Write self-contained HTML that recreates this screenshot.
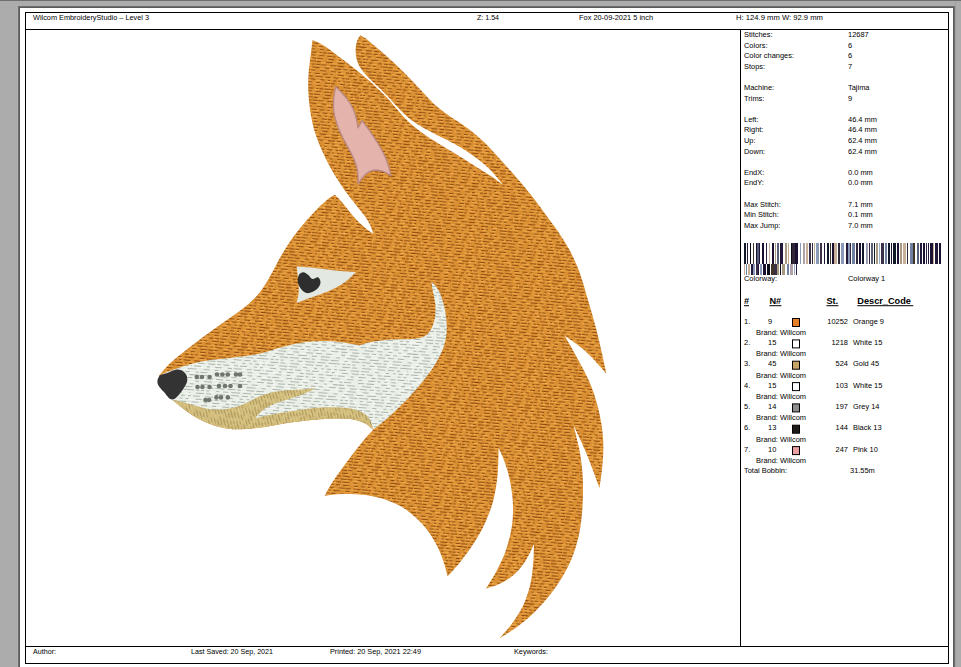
<!DOCTYPE html>
<html><head><meta charset="utf-8">
<style>
html,body{margin:0;padding:0;width:961px;height:667px;overflow:hidden;background:#acacac;}
svg{display:block;}
text{font-family:"Liberation Sans",sans-serif;fill:#000;}
</style></head><body>
<svg width="961" height="667" viewBox="0 0 961 667">
<rect x="0" y="0" width="961" height="667" fill="#acacac"/>
<rect x="0" y="0" width="961" height="1" fill="#6e6e6e"/>
<rect x="955" y="1" width="1" height="666" fill="#a0a0a0"/>
<rect x="18" y="6" width="937" height="661" fill="#6e6e6e"/>
<rect x="19" y="7" width="935" height="660" fill="#5a5a5a"/>
<rect x="20" y="8" width="933" height="659" fill="#ffffff"/>
<g fill="#000">
<rect x="25" y="12" width="924" height="1"/>
<rect x="25" y="12" width="1" height="652"/>
<rect x="948" y="12" width="1" height="652"/>
<rect x="25" y="663" width="924" height="1"/>
<rect x="25" y="29" width="924" height="1"/>
<rect x="25" y="646" width="924" height="1"/>
<rect x="740" y="29" width="1" height="618"/>
</g>
<defs><pattern id="tO" width="72" height="36" patternUnits="userSpaceOnUse" patternTransform="rotate(5)"><rect width="72" height="36" fill="#da8f32"/><rect x="-2" y="0" width="6" height="1" fill="#7c3a08" opacity="0.75"/><rect x="5" y="0" width="4" height="1" fill="#7c3a08" opacity="0.75"/><rect x="10" y="0" width="5" height="1" fill="#7c3a08" opacity="0.75"/><rect x="19" y="0" width="5" height="1" fill="#7c3a08" opacity="0.75"/><rect x="28" y="0" width="3" height="1" fill="#7c3a08" opacity="0.75"/><rect x="32" y="0" width="5" height="1" fill="#7c3a08" opacity="0.75"/><rect x="38" y="0" width="5" height="1" fill="#7c3a08" opacity="0.75"/><rect x="47" y="0" width="6" height="1" fill="#7c3a08" opacity="0.75"/><rect x="54" y="0" width="7" height="1" fill="#7c3a08" opacity="0.75"/><rect x="65" y="0" width="4" height="1" fill="#7c3a08" opacity="0.75"/><rect x="71" y="0" width="6" height="1" fill="#7c3a08" opacity="0.75"/><rect x="-1" y="0" width="6" height="1" fill="#7c3a08" opacity="0.75"/><rect x="-2" y="1" width="3" height="1" fill="#fcbc5c" opacity="0.6"/><rect x="3" y="1" width="3" height="1" fill="#fcbc5c" opacity="0.6"/><rect x="12" y="1" width="3" height="1" fill="#fcbc5c" opacity="0.6"/><rect x="20" y="1" width="8" height="1" fill="#fcbc5c" opacity="0.6"/><rect x="31" y="1" width="6" height="1" fill="#fcbc5c" opacity="0.6"/><rect x="39" y="1" width="7" height="1" fill="#fcbc5c" opacity="0.6"/><rect x="49" y="1" width="6" height="1" fill="#fcbc5c" opacity="0.6"/><rect x="60" y="1" width="7" height="1" fill="#fcbc5c" opacity="0.6"/><rect x="70" y="1" width="5" height="1" fill="#fcbc5c" opacity="0.6"/><rect x="-2" y="1" width="5" height="1" fill="#fcbc5c" opacity="0.6"/><rect x="-3" y="3" width="5" height="1" fill="#7c3a08" opacity="0.75"/><rect x="5" y="3" width="2" height="1" fill="#7c3a08" opacity="0.75"/><rect x="11" y="3" width="6" height="1" fill="#7c3a08" opacity="0.75"/><rect x="18" y="3" width="3" height="1" fill="#7c3a08" opacity="0.75"/><rect x="24" y="3" width="2" height="1" fill="#7c3a08" opacity="0.75"/><rect x="29" y="3" width="7" height="1" fill="#7c3a08" opacity="0.75"/><rect x="41" y="3" width="5" height="1" fill="#7c3a08" opacity="0.75"/><rect x="51" y="3" width="7" height="1" fill="#7c3a08" opacity="0.75"/><rect x="60" y="3" width="4" height="1" fill="#7c3a08" opacity="0.75"/><rect x="67" y="3" width="6" height="1" fill="#7c3a08" opacity="0.75"/><rect x="-5" y="3" width="6" height="1" fill="#7c3a08" opacity="0.75"/><rect x="-6" y="4" width="7" height="1" fill="#fcbc5c" opacity="0.6"/><rect x="6" y="4" width="7" height="1" fill="#fcbc5c" opacity="0.6"/><rect x="15" y="4" width="6" height="1" fill="#fcbc5c" opacity="0.6"/><rect x="24" y="4" width="8" height="1" fill="#fcbc5c" opacity="0.6"/><rect x="37" y="4" width="6" height="1" fill="#fcbc5c" opacity="0.6"/><rect x="46" y="4" width="5" height="1" fill="#fcbc5c" opacity="0.6"/><rect x="57" y="4" width="8" height="1" fill="#fcbc5c" opacity="0.6"/><rect x="69" y="4" width="3" height="1" fill="#fcbc5c" opacity="0.6"/><rect x="-8" y="6" width="2" height="1" fill="#7c3a08" opacity="0.75"/><rect x="-4" y="6" width="6" height="1" fill="#7c3a08" opacity="0.75"/><rect x="6" y="6" width="4" height="1" fill="#7c3a08" opacity="0.75"/><rect x="14" y="6" width="7" height="1" fill="#7c3a08" opacity="0.75"/><rect x="22" y="6" width="5" height="1" fill="#7c3a08" opacity="0.75"/><rect x="28" y="6" width="4" height="1" fill="#7c3a08" opacity="0.75"/><rect x="37" y="6" width="6" height="1" fill="#7c3a08" opacity="0.75"/><rect x="48" y="6" width="5" height="1" fill="#7c3a08" opacity="0.75"/><rect x="55" y="6" width="3" height="1" fill="#7c3a08" opacity="0.75"/><rect x="63" y="6" width="3" height="1" fill="#7c3a08" opacity="0.75"/><rect x="67" y="6" width="3" height="1" fill="#7c3a08" opacity="0.75"/><rect x="-6" y="7" width="7" height="1" fill="#fcbc5c" opacity="0.6"/><rect x="4" y="7" width="6" height="1" fill="#fcbc5c" opacity="0.6"/><rect x="16" y="7" width="5" height="1" fill="#fcbc5c" opacity="0.6"/><rect x="27" y="7" width="5" height="1" fill="#fcbc5c" opacity="0.6"/><rect x="37" y="7" width="5" height="1" fill="#fcbc5c" opacity="0.6"/><rect x="48" y="7" width="7" height="1" fill="#fcbc5c" opacity="0.6"/><rect x="57" y="7" width="6" height="1" fill="#fcbc5c" opacity="0.6"/><rect x="69" y="7" width="4" height="1" fill="#fcbc5c" opacity="0.6"/><rect x="-3" y="7" width="4" height="1" fill="#fcbc5c" opacity="0.6"/><rect x="-8" y="9" width="3" height="1" fill="#7c3a08" opacity="0.75"/><rect x="-1" y="9" width="2" height="1" fill="#7c3a08" opacity="0.75"/><rect x="5" y="9" width="4" height="1" fill="#7c3a08" opacity="0.75"/><rect x="14" y="9" width="6" height="1" fill="#7c3a08" opacity="0.75"/><rect x="22" y="9" width="6" height="1" fill="#7c3a08" opacity="0.75"/><rect x="32" y="9" width="5" height="1" fill="#7c3a08" opacity="0.75"/><rect x="40" y="9" width="5" height="1" fill="#7c3a08" opacity="0.75"/><rect x="48" y="9" width="2" height="1" fill="#7c3a08" opacity="0.75"/><rect x="55" y="9" width="6" height="1" fill="#7c3a08" opacity="0.75"/><rect x="66" y="9" width="6" height="1" fill="#7c3a08" opacity="0.75"/><rect x="-3" y="10" width="7" height="1" fill="#fcbc5c" opacity="0.6"/><rect x="6" y="10" width="4" height="1" fill="#fcbc5c" opacity="0.6"/><rect x="13" y="10" width="7" height="1" fill="#fcbc5c" opacity="0.6"/><rect x="26" y="10" width="4" height="1" fill="#fcbc5c" opacity="0.6"/><rect x="32" y="10" width="7" height="1" fill="#fcbc5c" opacity="0.6"/><rect x="43" y="10" width="3" height="1" fill="#fcbc5c" opacity="0.6"/><rect x="48" y="10" width="3" height="1" fill="#fcbc5c" opacity="0.6"/><rect x="53" y="10" width="6" height="1" fill="#fcbc5c" opacity="0.6"/><rect x="61" y="10" width="5" height="1" fill="#fcbc5c" opacity="0.6"/><rect x="69" y="10" width="5" height="1" fill="#fcbc5c" opacity="0.6"/><rect x="-3" y="10" width="5" height="1" fill="#fcbc5c" opacity="0.6"/><rect x="-2" y="12" width="4" height="1" fill="#7c3a08" opacity="0.75"/><rect x="5" y="12" width="2" height="1" fill="#7c3a08" opacity="0.75"/><rect x="9" y="12" width="3" height="1" fill="#7c3a08" opacity="0.75"/><rect x="15" y="12" width="6" height="1" fill="#7c3a08" opacity="0.75"/><rect x="23" y="12" width="7" height="1" fill="#7c3a08" opacity="0.75"/><rect x="33" y="12" width="7" height="1" fill="#7c3a08" opacity="0.75"/><rect x="43" y="12" width="5" height="1" fill="#7c3a08" opacity="0.75"/><rect x="51" y="12" width="5" height="1" fill="#7c3a08" opacity="0.75"/><rect x="60" y="12" width="2" height="1" fill="#7c3a08" opacity="0.75"/><rect x="63" y="12" width="4" height="1" fill="#7c3a08" opacity="0.75"/><rect x="71" y="12" width="4" height="1" fill="#7c3a08" opacity="0.75"/><rect x="-1" y="12" width="4" height="1" fill="#7c3a08" opacity="0.75"/><rect x="-6" y="13" width="4" height="1" fill="#fcbc5c" opacity="0.6"/><rect x="2" y="13" width="3" height="1" fill="#fcbc5c" opacity="0.6"/><rect x="9" y="13" width="8" height="1" fill="#fcbc5c" opacity="0.6"/><rect x="23" y="13" width="4" height="1" fill="#fcbc5c" opacity="0.6"/><rect x="33" y="13" width="6" height="1" fill="#fcbc5c" opacity="0.6"/><rect x="41" y="13" width="4" height="1" fill="#fcbc5c" opacity="0.6"/><rect x="47" y="13" width="6" height="1" fill="#fcbc5c" opacity="0.6"/><rect x="56" y="13" width="3" height="1" fill="#fcbc5c" opacity="0.6"/><rect x="62" y="13" width="6" height="1" fill="#fcbc5c" opacity="0.6"/><rect x="-6" y="15" width="6" height="1" fill="#7c3a08" opacity="0.75"/><rect x="2" y="15" width="7" height="1" fill="#7c3a08" opacity="0.75"/><rect x="14" y="15" width="5" height="1" fill="#7c3a08" opacity="0.75"/><rect x="21" y="15" width="6" height="1" fill="#7c3a08" opacity="0.75"/><rect x="28" y="15" width="5" height="1" fill="#7c3a08" opacity="0.75"/><rect x="38" y="15" width="4" height="1" fill="#7c3a08" opacity="0.75"/><rect x="46" y="15" width="2" height="1" fill="#7c3a08" opacity="0.75"/><rect x="51" y="15" width="3" height="1" fill="#7c3a08" opacity="0.75"/><rect x="56" y="15" width="2" height="1" fill="#7c3a08" opacity="0.75"/><rect x="61" y="15" width="2" height="1" fill="#7c3a08" opacity="0.75"/><rect x="64" y="15" width="4" height="1" fill="#7c3a08" opacity="0.75"/><rect x="71" y="15" width="7" height="1" fill="#7c3a08" opacity="0.75"/><rect x="-1" y="15" width="7" height="1" fill="#7c3a08" opacity="0.75"/><rect x="-3" y="16" width="7" height="1" fill="#fcbc5c" opacity="0.6"/><rect x="8" y="16" width="4" height="1" fill="#fcbc5c" opacity="0.6"/><rect x="14" y="16" width="7" height="1" fill="#fcbc5c" opacity="0.6"/><rect x="23" y="16" width="7" height="1" fill="#fcbc5c" opacity="0.6"/><rect x="33" y="16" width="7" height="1" fill="#fcbc5c" opacity="0.6"/><rect x="45" y="16" width="4" height="1" fill="#fcbc5c" opacity="0.6"/><rect x="55" y="16" width="7" height="1" fill="#fcbc5c" opacity="0.6"/><rect x="64" y="16" width="6" height="1" fill="#fcbc5c" opacity="0.6"/><rect x="-5" y="18" width="2" height="1" fill="#7c3a08" opacity="0.75"/><rect x="-1" y="18" width="6" height="1" fill="#7c3a08" opacity="0.75"/><rect x="9" y="18" width="6" height="1" fill="#7c3a08" opacity="0.75"/><rect x="17" y="18" width="5" height="1" fill="#7c3a08" opacity="0.75"/><rect x="23" y="18" width="7" height="1" fill="#7c3a08" opacity="0.75"/><rect x="34" y="18" width="4" height="1" fill="#7c3a08" opacity="0.75"/><rect x="43" y="18" width="5" height="1" fill="#7c3a08" opacity="0.75"/><rect x="49" y="18" width="4" height="1" fill="#7c3a08" opacity="0.75"/><rect x="58" y="18" width="5" height="1" fill="#7c3a08" opacity="0.75"/><rect x="66" y="18" width="2" height="1" fill="#7c3a08" opacity="0.75"/><rect x="70" y="18" width="3" height="1" fill="#7c3a08" opacity="0.75"/><rect x="-2" y="18" width="3" height="1" fill="#7c3a08" opacity="0.75"/><rect x="-6" y="19" width="7" height="1" fill="#fcbc5c" opacity="0.6"/><rect x="4" y="19" width="5" height="1" fill="#fcbc5c" opacity="0.6"/><rect x="14" y="19" width="4" height="1" fill="#fcbc5c" opacity="0.6"/><rect x="22" y="19" width="8" height="1" fill="#fcbc5c" opacity="0.6"/><rect x="32" y="19" width="6" height="1" fill="#fcbc5c" opacity="0.6"/><rect x="44" y="19" width="5" height="1" fill="#fcbc5c" opacity="0.6"/><rect x="55" y="19" width="6" height="1" fill="#fcbc5c" opacity="0.6"/><rect x="67" y="19" width="4" height="1" fill="#fcbc5c" opacity="0.6"/><rect x="0" y="21" width="2" height="1" fill="#7c3a08" opacity="0.75"/><rect x="4" y="21" width="3" height="1" fill="#7c3a08" opacity="0.75"/><rect x="9" y="21" width="6" height="1" fill="#7c3a08" opacity="0.75"/><rect x="17" y="21" width="4" height="1" fill="#7c3a08" opacity="0.75"/><rect x="24" y="21" width="6" height="1" fill="#7c3a08" opacity="0.75"/><rect x="35" y="21" width="4" height="1" fill="#7c3a08" opacity="0.75"/><rect x="42" y="21" width="4" height="1" fill="#7c3a08" opacity="0.75"/><rect x="49" y="21" width="2" height="1" fill="#7c3a08" opacity="0.75"/><rect x="54" y="21" width="3" height="1" fill="#7c3a08" opacity="0.75"/><rect x="62" y="21" width="7" height="1" fill="#7c3a08" opacity="0.75"/><rect x="-1" y="22" width="7" height="1" fill="#fcbc5c" opacity="0.6"/><rect x="12" y="22" width="3" height="1" fill="#fcbc5c" opacity="0.6"/><rect x="19" y="22" width="3" height="1" fill="#fcbc5c" opacity="0.6"/><rect x="27" y="22" width="3" height="1" fill="#fcbc5c" opacity="0.6"/><rect x="35" y="22" width="4" height="1" fill="#fcbc5c" opacity="0.6"/><rect x="42" y="22" width="5" height="1" fill="#fcbc5c" opacity="0.6"/><rect x="49" y="22" width="7" height="1" fill="#fcbc5c" opacity="0.6"/><rect x="62" y="22" width="6" height="1" fill="#fcbc5c" opacity="0.6"/><rect x="70" y="22" width="7" height="1" fill="#fcbc5c" opacity="0.6"/><rect x="-2" y="22" width="7" height="1" fill="#fcbc5c" opacity="0.6"/><rect x="-3" y="24" width="6" height="1" fill="#7c3a08" opacity="0.75"/><rect x="4" y="24" width="4" height="1" fill="#7c3a08" opacity="0.75"/><rect x="11" y="24" width="4" height="1" fill="#7c3a08" opacity="0.75"/><rect x="20" y="24" width="6" height="1" fill="#7c3a08" opacity="0.75"/><rect x="27" y="24" width="5" height="1" fill="#7c3a08" opacity="0.75"/><rect x="35" y="24" width="2" height="1" fill="#7c3a08" opacity="0.75"/><rect x="38" y="24" width="4" height="1" fill="#7c3a08" opacity="0.75"/><rect x="43" y="24" width="6" height="1" fill="#7c3a08" opacity="0.75"/><rect x="50" y="24" width="2" height="1" fill="#7c3a08" opacity="0.75"/><rect x="56" y="24" width="2" height="1" fill="#7c3a08" opacity="0.75"/><rect x="59" y="24" width="3" height="1" fill="#7c3a08" opacity="0.75"/><rect x="64" y="24" width="6" height="1" fill="#7c3a08" opacity="0.75"/><rect x="-1" y="25" width="3" height="1" fill="#fcbc5c" opacity="0.6"/><rect x="7" y="25" width="4" height="1" fill="#fcbc5c" opacity="0.6"/><rect x="14" y="25" width="4" height="1" fill="#fcbc5c" opacity="0.6"/><rect x="20" y="25" width="6" height="1" fill="#fcbc5c" opacity="0.6"/><rect x="31" y="25" width="7" height="1" fill="#fcbc5c" opacity="0.6"/><rect x="42" y="25" width="7" height="1" fill="#fcbc5c" opacity="0.6"/><rect x="53" y="25" width="8" height="1" fill="#fcbc5c" opacity="0.6"/><rect x="66" y="25" width="5" height="1" fill="#fcbc5c" opacity="0.6"/><rect x="-3" y="27" width="7" height="1" fill="#7c3a08" opacity="0.75"/><rect x="7" y="27" width="2" height="1" fill="#7c3a08" opacity="0.75"/><rect x="10" y="27" width="2" height="1" fill="#7c3a08" opacity="0.75"/><rect x="15" y="27" width="7" height="1" fill="#7c3a08" opacity="0.75"/><rect x="27" y="27" width="4" height="1" fill="#7c3a08" opacity="0.75"/><rect x="35" y="27" width="5" height="1" fill="#7c3a08" opacity="0.75"/><rect x="43" y="27" width="5" height="1" fill="#7c3a08" opacity="0.75"/><rect x="49" y="27" width="2" height="1" fill="#7c3a08" opacity="0.75"/><rect x="54" y="27" width="6" height="1" fill="#7c3a08" opacity="0.75"/><rect x="64" y="27" width="2" height="1" fill="#7c3a08" opacity="0.75"/><rect x="69" y="27" width="3" height="1" fill="#7c3a08" opacity="0.75"/><rect x="-6" y="28" width="7" height="1" fill="#fcbc5c" opacity="0.6"/><rect x="6" y="28" width="8" height="1" fill="#fcbc5c" opacity="0.6"/><rect x="18" y="28" width="5" height="1" fill="#fcbc5c" opacity="0.6"/><rect x="26" y="28" width="7" height="1" fill="#fcbc5c" opacity="0.6"/><rect x="36" y="28" width="5" height="1" fill="#fcbc5c" opacity="0.6"/><rect x="44" y="28" width="4" height="1" fill="#fcbc5c" opacity="0.6"/><rect x="52" y="28" width="3" height="1" fill="#fcbc5c" opacity="0.6"/><rect x="59" y="28" width="3" height="1" fill="#fcbc5c" opacity="0.6"/><rect x="67" y="28" width="3" height="1" fill="#fcbc5c" opacity="0.6"/><rect x="-5" y="30" width="3" height="1" fill="#7c3a08" opacity="0.75"/><rect x="2" y="30" width="4" height="1" fill="#7c3a08" opacity="0.75"/><rect x="7" y="30" width="4" height="1" fill="#7c3a08" opacity="0.75"/><rect x="13" y="30" width="4" height="1" fill="#7c3a08" opacity="0.75"/><rect x="22" y="30" width="4" height="1" fill="#7c3a08" opacity="0.75"/><rect x="28" y="30" width="4" height="1" fill="#7c3a08" opacity="0.75"/><rect x="33" y="30" width="6" height="1" fill="#7c3a08" opacity="0.75"/><rect x="44" y="30" width="6" height="1" fill="#7c3a08" opacity="0.75"/><rect x="55" y="30" width="2" height="1" fill="#7c3a08" opacity="0.75"/><rect x="59" y="30" width="3" height="1" fill="#7c3a08" opacity="0.75"/><rect x="63" y="30" width="3" height="1" fill="#7c3a08" opacity="0.75"/><rect x="70" y="30" width="2" height="1" fill="#7c3a08" opacity="0.75"/><rect x="-4" y="31" width="3" height="1" fill="#fcbc5c" opacity="0.6"/><rect x="1" y="31" width="3" height="1" fill="#fcbc5c" opacity="0.6"/><rect x="6" y="31" width="5" height="1" fill="#fcbc5c" opacity="0.6"/><rect x="15" y="31" width="6" height="1" fill="#fcbc5c" opacity="0.6"/><rect x="26" y="31" width="4" height="1" fill="#fcbc5c" opacity="0.6"/><rect x="32" y="31" width="7" height="1" fill="#fcbc5c" opacity="0.6"/><rect x="43" y="31" width="3" height="1" fill="#fcbc5c" opacity="0.6"/><rect x="52" y="31" width="8" height="1" fill="#fcbc5c" opacity="0.6"/><rect x="63" y="31" width="4" height="1" fill="#fcbc5c" opacity="0.6"/><rect x="70" y="31" width="4" height="1" fill="#fcbc5c" opacity="0.6"/><rect x="-2" y="31" width="4" height="1" fill="#fcbc5c" opacity="0.6"/><rect x="-4" y="33" width="2" height="1" fill="#7c3a08" opacity="0.75"/><rect x="3" y="33" width="6" height="1" fill="#7c3a08" opacity="0.75"/><rect x="12" y="33" width="3" height="1" fill="#7c3a08" opacity="0.75"/><rect x="17" y="33" width="3" height="1" fill="#7c3a08" opacity="0.75"/><rect x="25" y="33" width="7" height="1" fill="#7c3a08" opacity="0.75"/><rect x="33" y="33" width="4" height="1" fill="#7c3a08" opacity="0.75"/><rect x="42" y="33" width="7" height="1" fill="#7c3a08" opacity="0.75"/><rect x="54" y="33" width="7" height="1" fill="#7c3a08" opacity="0.75"/><rect x="63" y="33" width="3" height="1" fill="#7c3a08" opacity="0.75"/><rect x="69" y="33" width="5" height="1" fill="#7c3a08" opacity="0.75"/><rect x="-3" y="33" width="5" height="1" fill="#7c3a08" opacity="0.75"/><rect x="-1" y="34" width="3" height="1" fill="#fcbc5c" opacity="0.6"/><rect x="5" y="34" width="5" height="1" fill="#fcbc5c" opacity="0.6"/><rect x="12" y="34" width="8" height="1" fill="#fcbc5c" opacity="0.6"/><rect x="25" y="34" width="6" height="1" fill="#fcbc5c" opacity="0.6"/><rect x="37" y="34" width="5" height="1" fill="#fcbc5c" opacity="0.6"/><rect x="48" y="34" width="6" height="1" fill="#fcbc5c" opacity="0.6"/><rect x="60" y="34" width="6" height="1" fill="#fcbc5c" opacity="0.6"/><rect x="68" y="34" width="6" height="1" fill="#fcbc5c" opacity="0.6"/><rect x="-4" y="34" width="6" height="1" fill="#fcbc5c" opacity="0.6"/></pattern><pattern id="tW" width="72" height="36" patternUnits="userSpaceOnUse" patternTransform="rotate(4)"><rect width="72" height="36" fill="#e9eee7"/><rect x="0" y="0" width="3" height="1" fill="#8e988a" opacity="0.65"/><rect x="5" y="0" width="5" height="1" fill="#8e988a" opacity="0.65"/><rect x="13" y="0" width="8" height="1" fill="#8e988a" opacity="0.65"/><rect x="28" y="0" width="9" height="1" fill="#8e988a" opacity="0.65"/><rect x="41" y="0" width="5" height="1" fill="#8e988a" opacity="0.65"/><rect x="52" y="0" width="4" height="1" fill="#8e988a" opacity="0.65"/><rect x="62" y="0" width="3" height="1" fill="#8e988a" opacity="0.65"/><rect x="71" y="0" width="8" height="1" fill="#8e988a" opacity="0.65"/><rect x="-1" y="0" width="8" height="1" fill="#8e988a" opacity="0.65"/><rect x="-3" y="1" width="9" height="1" fill="#ffffff" opacity="0.5"/><rect x="11" y="1" width="10" height="1" fill="#ffffff" opacity="0.5"/><rect x="27" y="1" width="6" height="1" fill="#ffffff" opacity="0.5"/><rect x="39" y="1" width="7" height="1" fill="#ffffff" opacity="0.5"/><rect x="52" y="1" width="6" height="1" fill="#ffffff" opacity="0.5"/><rect x="60" y="1" width="10" height="1" fill="#ffffff" opacity="0.5"/><rect x="-5" y="3" width="6" height="1" fill="#8e988a" opacity="0.65"/><rect x="5" y="3" width="6" height="1" fill="#8e988a" opacity="0.65"/><rect x="16" y="3" width="7" height="1" fill="#8e988a" opacity="0.65"/><rect x="26" y="3" width="7" height="1" fill="#8e988a" opacity="0.65"/><rect x="36" y="3" width="4" height="1" fill="#8e988a" opacity="0.65"/><rect x="43" y="3" width="3" height="1" fill="#8e988a" opacity="0.65"/><rect x="49" y="3" width="5" height="1" fill="#8e988a" opacity="0.65"/><rect x="57" y="3" width="4" height="1" fill="#8e988a" opacity="0.65"/><rect x="67" y="3" width="7" height="1" fill="#8e988a" opacity="0.65"/><rect x="-5" y="3" width="7" height="1" fill="#8e988a" opacity="0.65"/><rect x="-4" y="4" width="9" height="1" fill="#ffffff" opacity="0.5"/><rect x="11" y="4" width="5" height="1" fill="#ffffff" opacity="0.5"/><rect x="21" y="4" width="10" height="1" fill="#ffffff" opacity="0.5"/><rect x="36" y="4" width="9" height="1" fill="#ffffff" opacity="0.5"/><rect x="51" y="4" width="10" height="1" fill="#ffffff" opacity="0.5"/><rect x="65" y="4" width="10" height="1" fill="#ffffff" opacity="0.5"/><rect x="-7" y="4" width="10" height="1" fill="#ffffff" opacity="0.5"/><rect x="-5" y="6" width="5" height="1" fill="#8e988a" opacity="0.65"/><rect x="5" y="6" width="4" height="1" fill="#8e988a" opacity="0.65"/><rect x="14" y="6" width="8" height="1" fill="#8e988a" opacity="0.65"/><rect x="29" y="6" width="6" height="1" fill="#8e988a" opacity="0.65"/><rect x="42" y="6" width="7" height="1" fill="#8e988a" opacity="0.65"/><rect x="52" y="6" width="6" height="1" fill="#8e988a" opacity="0.65"/><rect x="62" y="6" width="6" height="1" fill="#8e988a" opacity="0.65"/><rect x="-4" y="7" width="10" height="1" fill="#ffffff" opacity="0.5"/><rect x="10" y="7" width="9" height="1" fill="#ffffff" opacity="0.5"/><rect x="24" y="7" width="7" height="1" fill="#ffffff" opacity="0.5"/><rect x="35" y="7" width="8" height="1" fill="#ffffff" opacity="0.5"/><rect x="49" y="7" width="9" height="1" fill="#ffffff" opacity="0.5"/><rect x="63" y="7" width="7" height="1" fill="#ffffff" opacity="0.5"/><rect x="-5" y="9" width="9" height="1" fill="#8e988a" opacity="0.65"/><rect x="11" y="9" width="9" height="1" fill="#8e988a" opacity="0.65"/><rect x="23" y="9" width="7" height="1" fill="#8e988a" opacity="0.65"/><rect x="34" y="9" width="9" height="1" fill="#8e988a" opacity="0.65"/><rect x="48" y="9" width="5" height="1" fill="#8e988a" opacity="0.65"/><rect x="57" y="9" width="9" height="1" fill="#8e988a" opacity="0.65"/><rect x="-6" y="10" width="8" height="1" fill="#ffffff" opacity="0.5"/><rect x="8" y="10" width="8" height="1" fill="#ffffff" opacity="0.5"/><rect x="22" y="10" width="9" height="1" fill="#ffffff" opacity="0.5"/><rect x="37" y="10" width="8" height="1" fill="#ffffff" opacity="0.5"/><rect x="50" y="10" width="6" height="1" fill="#ffffff" opacity="0.5"/><rect x="59" y="10" width="7" height="1" fill="#ffffff" opacity="0.5"/><rect x="-5" y="12" width="8" height="1" fill="#8e988a" opacity="0.65"/><rect x="9" y="12" width="3" height="1" fill="#8e988a" opacity="0.65"/><rect x="16" y="12" width="8" height="1" fill="#8e988a" opacity="0.65"/><rect x="26" y="12" width="9" height="1" fill="#8e988a" opacity="0.65"/><rect x="38" y="12" width="8" height="1" fill="#8e988a" opacity="0.65"/><rect x="48" y="12" width="3" height="1" fill="#8e988a" opacity="0.65"/><rect x="57" y="12" width="8" height="1" fill="#8e988a" opacity="0.65"/><rect x="67" y="12" width="5" height="1" fill="#8e988a" opacity="0.65"/><rect x="-1" y="13" width="9" height="1" fill="#ffffff" opacity="0.5"/><rect x="10" y="13" width="10" height="1" fill="#ffffff" opacity="0.5"/><rect x="26" y="13" width="5" height="1" fill="#ffffff" opacity="0.5"/><rect x="35" y="13" width="5" height="1" fill="#ffffff" opacity="0.5"/><rect x="43" y="13" width="4" height="1" fill="#ffffff" opacity="0.5"/><rect x="52" y="13" width="9" height="1" fill="#ffffff" opacity="0.5"/><rect x="63" y="13" width="4" height="1" fill="#ffffff" opacity="0.5"/><rect x="71" y="13" width="6" height="1" fill="#ffffff" opacity="0.5"/><rect x="-1" y="13" width="6" height="1" fill="#ffffff" opacity="0.5"/><rect x="-3" y="15" width="8" height="1" fill="#8e988a" opacity="0.65"/><rect x="7" y="15" width="3" height="1" fill="#8e988a" opacity="0.65"/><rect x="12" y="15" width="3" height="1" fill="#8e988a" opacity="0.65"/><rect x="17" y="15" width="3" height="1" fill="#8e988a" opacity="0.65"/><rect x="27" y="15" width="3" height="1" fill="#8e988a" opacity="0.65"/><rect x="34" y="15" width="5" height="1" fill="#8e988a" opacity="0.65"/><rect x="42" y="15" width="9" height="1" fill="#8e988a" opacity="0.65"/><rect x="54" y="15" width="8" height="1" fill="#8e988a" opacity="0.65"/><rect x="65" y="15" width="7" height="1" fill="#8e988a" opacity="0.65"/><rect x="0" y="16" width="7" height="1" fill="#ffffff" opacity="0.5"/><rect x="13" y="16" width="4" height="1" fill="#ffffff" opacity="0.5"/><rect x="20" y="16" width="5" height="1" fill="#ffffff" opacity="0.5"/><rect x="27" y="16" width="4" height="1" fill="#ffffff" opacity="0.5"/><rect x="35" y="16" width="8" height="1" fill="#ffffff" opacity="0.5"/><rect x="45" y="16" width="6" height="1" fill="#ffffff" opacity="0.5"/><rect x="55" y="16" width="7" height="1" fill="#ffffff" opacity="0.5"/><rect x="64" y="16" width="6" height="1" fill="#ffffff" opacity="0.5"/><rect x="-8" y="18" width="9" height="1" fill="#8e988a" opacity="0.65"/><rect x="7" y="18" width="8" height="1" fill="#8e988a" opacity="0.65"/><rect x="17" y="18" width="5" height="1" fill="#8e988a" opacity="0.65"/><rect x="27" y="18" width="9" height="1" fill="#8e988a" opacity="0.65"/><rect x="42" y="18" width="8" height="1" fill="#8e988a" opacity="0.65"/><rect x="53" y="18" width="6" height="1" fill="#8e988a" opacity="0.65"/><rect x="62" y="18" width="3" height="1" fill="#8e988a" opacity="0.65"/><rect x="-5" y="19" width="6" height="1" fill="#ffffff" opacity="0.5"/><rect x="3" y="19" width="4" height="1" fill="#ffffff" opacity="0.5"/><rect x="12" y="19" width="10" height="1" fill="#ffffff" opacity="0.5"/><rect x="25" y="19" width="8" height="1" fill="#ffffff" opacity="0.5"/><rect x="39" y="19" width="10" height="1" fill="#ffffff" opacity="0.5"/><rect x="54" y="19" width="7" height="1" fill="#ffffff" opacity="0.5"/><rect x="67" y="19" width="6" height="1" fill="#ffffff" opacity="0.5"/><rect x="-5" y="19" width="6" height="1" fill="#ffffff" opacity="0.5"/><rect x="-5" y="21" width="5" height="1" fill="#8e988a" opacity="0.65"/><rect x="4" y="21" width="7" height="1" fill="#8e988a" opacity="0.65"/><rect x="16" y="21" width="8" height="1" fill="#8e988a" opacity="0.65"/><rect x="26" y="21" width="8" height="1" fill="#8e988a" opacity="0.65"/><rect x="40" y="21" width="4" height="1" fill="#8e988a" opacity="0.65"/><rect x="51" y="21" width="3" height="1" fill="#8e988a" opacity="0.65"/><rect x="58" y="21" width="3" height="1" fill="#8e988a" opacity="0.65"/><rect x="64" y="21" width="4" height="1" fill="#8e988a" opacity="0.65"/><rect x="71" y="21" width="3" height="1" fill="#8e988a" opacity="0.65"/><rect x="-1" y="21" width="3" height="1" fill="#8e988a" opacity="0.65"/><rect x="-5" y="22" width="5" height="1" fill="#ffffff" opacity="0.5"/><rect x="6" y="22" width="9" height="1" fill="#ffffff" opacity="0.5"/><rect x="17" y="22" width="5" height="1" fill="#ffffff" opacity="0.5"/><rect x="25" y="22" width="9" height="1" fill="#ffffff" opacity="0.5"/><rect x="39" y="22" width="4" height="1" fill="#ffffff" opacity="0.5"/><rect x="47" y="22" width="4" height="1" fill="#ffffff" opacity="0.5"/><rect x="57" y="22" width="5" height="1" fill="#ffffff" opacity="0.5"/><rect x="68" y="22" width="10" height="1" fill="#ffffff" opacity="0.5"/><rect x="-4" y="22" width="10" height="1" fill="#ffffff" opacity="0.5"/><rect x="-5" y="24" width="5" height="1" fill="#8e988a" opacity="0.65"/><rect x="7" y="24" width="6" height="1" fill="#8e988a" opacity="0.65"/><rect x="17" y="24" width="7" height="1" fill="#8e988a" opacity="0.65"/><rect x="26" y="24" width="4" height="1" fill="#8e988a" opacity="0.65"/><rect x="32" y="24" width="6" height="1" fill="#8e988a" opacity="0.65"/><rect x="43" y="24" width="4" height="1" fill="#8e988a" opacity="0.65"/><rect x="49" y="24" width="7" height="1" fill="#8e988a" opacity="0.65"/><rect x="63" y="24" width="3" height="1" fill="#8e988a" opacity="0.65"/><rect x="69" y="24" width="3" height="1" fill="#8e988a" opacity="0.65"/><rect x="0" y="25" width="5" height="1" fill="#ffffff" opacity="0.5"/><rect x="8" y="25" width="4" height="1" fill="#ffffff" opacity="0.5"/><rect x="15" y="25" width="4" height="1" fill="#ffffff" opacity="0.5"/><rect x="25" y="25" width="9" height="1" fill="#ffffff" opacity="0.5"/><rect x="39" y="25" width="7" height="1" fill="#ffffff" opacity="0.5"/><rect x="50" y="25" width="8" height="1" fill="#ffffff" opacity="0.5"/><rect x="63" y="25" width="5" height="1" fill="#ffffff" opacity="0.5"/><rect x="71" y="25" width="9" height="1" fill="#ffffff" opacity="0.5"/><rect x="-1" y="25" width="9" height="1" fill="#ffffff" opacity="0.5"/><rect x="-6" y="27" width="7" height="1" fill="#8e988a" opacity="0.65"/><rect x="3" y="27" width="7" height="1" fill="#8e988a" opacity="0.65"/><rect x="16" y="27" width="3" height="1" fill="#8e988a" opacity="0.65"/><rect x="24" y="27" width="7" height="1" fill="#8e988a" opacity="0.65"/><rect x="37" y="27" width="4" height="1" fill="#8e988a" opacity="0.65"/><rect x="43" y="27" width="8" height="1" fill="#8e988a" opacity="0.65"/><rect x="56" y="27" width="5" height="1" fill="#8e988a" opacity="0.65"/><rect x="63" y="27" width="7" height="1" fill="#8e988a" opacity="0.65"/><rect x="-4" y="28" width="6" height="1" fill="#ffffff" opacity="0.5"/><rect x="6" y="28" width="9" height="1" fill="#ffffff" opacity="0.5"/><rect x="19" y="28" width="6" height="1" fill="#ffffff" opacity="0.5"/><rect x="27" y="28" width="10" height="1" fill="#ffffff" opacity="0.5"/><rect x="42" y="28" width="4" height="1" fill="#ffffff" opacity="0.5"/><rect x="48" y="28" width="6" height="1" fill="#ffffff" opacity="0.5"/><rect x="57" y="28" width="10" height="1" fill="#ffffff" opacity="0.5"/><rect x="69" y="28" width="10" height="1" fill="#ffffff" opacity="0.5"/><rect x="-3" y="28" width="10" height="1" fill="#ffffff" opacity="0.5"/><rect x="0" y="30" width="6" height="1" fill="#8e988a" opacity="0.65"/><rect x="13" y="30" width="6" height="1" fill="#8e988a" opacity="0.65"/><rect x="24" y="30" width="4" height="1" fill="#8e988a" opacity="0.65"/><rect x="34" y="30" width="7" height="1" fill="#8e988a" opacity="0.65"/><rect x="43" y="30" width="3" height="1" fill="#8e988a" opacity="0.65"/><rect x="50" y="30" width="3" height="1" fill="#8e988a" opacity="0.65"/><rect x="57" y="30" width="5" height="1" fill="#8e988a" opacity="0.65"/><rect x="69" y="30" width="3" height="1" fill="#8e988a" opacity="0.65"/><rect x="-6" y="31" width="7" height="1" fill="#ffffff" opacity="0.5"/><rect x="4" y="31" width="4" height="1" fill="#ffffff" opacity="0.5"/><rect x="14" y="31" width="6" height="1" fill="#ffffff" opacity="0.5"/><rect x="25" y="31" width="9" height="1" fill="#ffffff" opacity="0.5"/><rect x="39" y="31" width="5" height="1" fill="#ffffff" opacity="0.5"/><rect x="48" y="31" width="7" height="1" fill="#ffffff" opacity="0.5"/><rect x="57" y="31" width="6" height="1" fill="#ffffff" opacity="0.5"/><rect x="65" y="31" width="4" height="1" fill="#ffffff" opacity="0.5"/><rect x="71" y="31" width="8" height="1" fill="#ffffff" opacity="0.5"/><rect x="-1" y="31" width="8" height="1" fill="#ffffff" opacity="0.5"/><rect x="-6" y="33" width="4" height="1" fill="#8e988a" opacity="0.65"/><rect x="5" y="33" width="3" height="1" fill="#8e988a" opacity="0.65"/><rect x="10" y="33" width="7" height="1" fill="#8e988a" opacity="0.65"/><rect x="24" y="33" width="6" height="1" fill="#8e988a" opacity="0.65"/><rect x="32" y="33" width="8" height="1" fill="#8e988a" opacity="0.65"/><rect x="47" y="33" width="6" height="1" fill="#8e988a" opacity="0.65"/><rect x="57" y="33" width="5" height="1" fill="#8e988a" opacity="0.65"/><rect x="67" y="33" width="4" height="1" fill="#8e988a" opacity="0.65"/><rect x="-2" y="34" width="7" height="1" fill="#ffffff" opacity="0.5"/><rect x="11" y="34" width="10" height="1" fill="#ffffff" opacity="0.5"/><rect x="26" y="34" width="9" height="1" fill="#ffffff" opacity="0.5"/><rect x="40" y="34" width="7" height="1" fill="#ffffff" opacity="0.5"/><rect x="51" y="34" width="7" height="1" fill="#ffffff" opacity="0.5"/><rect x="61" y="34" width="5" height="1" fill="#ffffff" opacity="0.5"/><rect x="71" y="34" width="8" height="1" fill="#ffffff" opacity="0.5"/><rect x="-1" y="34" width="8" height="1" fill="#ffffff" opacity="0.5"/></pattern><pattern id="tG" width="72" height="36" patternUnits="userSpaceOnUse" patternTransform="rotate(75)"><rect width="72" height="36" fill="#d0bb7a"/><rect x="-3" y="0" width="7" height="1" fill="#8c7440" opacity="0.5"/><rect x="10" y="0" width="4" height="1" fill="#8c7440" opacity="0.5"/><rect x="18" y="0" width="7" height="1" fill="#8c7440" opacity="0.5"/><rect x="30" y="0" width="8" height="1" fill="#8c7440" opacity="0.5"/><rect x="44" y="0" width="3" height="1" fill="#8c7440" opacity="0.5"/><rect x="53" y="0" width="3" height="1" fill="#8c7440" opacity="0.5"/><rect x="61" y="0" width="5" height="1" fill="#8c7440" opacity="0.5"/><rect x="-1" y="1" width="5" height="1" fill="#ecdc9c" opacity="0.45"/><rect x="9" y="1" width="8" height="1" fill="#ecdc9c" opacity="0.45"/><rect x="23" y="1" width="7" height="1" fill="#ecdc9c" opacity="0.45"/><rect x="35" y="1" width="9" height="1" fill="#ecdc9c" opacity="0.45"/><rect x="47" y="1" width="5" height="1" fill="#ecdc9c" opacity="0.45"/><rect x="55" y="1" width="10" height="1" fill="#ecdc9c" opacity="0.45"/><rect x="71" y="1" width="7" height="1" fill="#ecdc9c" opacity="0.45"/><rect x="-1" y="1" width="7" height="1" fill="#ecdc9c" opacity="0.45"/><rect x="-1" y="3" width="4" height="1" fill="#8c7440" opacity="0.5"/><rect x="9" y="3" width="3" height="1" fill="#8c7440" opacity="0.5"/><rect x="16" y="3" width="9" height="1" fill="#8c7440" opacity="0.5"/><rect x="27" y="3" width="9" height="1" fill="#8c7440" opacity="0.5"/><rect x="40" y="3" width="6" height="1" fill="#8c7440" opacity="0.5"/><rect x="52" y="3" width="8" height="1" fill="#8c7440" opacity="0.5"/><rect x="65" y="3" width="8" height="1" fill="#8c7440" opacity="0.5"/><rect x="-7" y="3" width="8" height="1" fill="#8c7440" opacity="0.5"/><rect x="-3" y="4" width="9" height="1" fill="#ecdc9c" opacity="0.45"/><rect x="12" y="4" width="7" height="1" fill="#ecdc9c" opacity="0.45"/><rect x="22" y="4" width="6" height="1" fill="#ecdc9c" opacity="0.45"/><rect x="30" y="4" width="4" height="1" fill="#ecdc9c" opacity="0.45"/><rect x="37" y="4" width="7" height="1" fill="#ecdc9c" opacity="0.45"/><rect x="47" y="4" width="6" height="1" fill="#ecdc9c" opacity="0.45"/><rect x="58" y="4" width="10" height="1" fill="#ecdc9c" opacity="0.45"/><rect x="-6" y="6" width="7" height="1" fill="#8c7440" opacity="0.5"/><rect x="6" y="6" width="7" height="1" fill="#8c7440" opacity="0.5"/><rect x="17" y="6" width="7" height="1" fill="#8c7440" opacity="0.5"/><rect x="30" y="6" width="6" height="1" fill="#8c7440" opacity="0.5"/><rect x="42" y="6" width="4" height="1" fill="#8c7440" opacity="0.5"/><rect x="50" y="6" width="8" height="1" fill="#8c7440" opacity="0.5"/><rect x="60" y="6" width="9" height="1" fill="#8c7440" opacity="0.5"/><rect x="-4" y="7" width="9" height="1" fill="#ecdc9c" opacity="0.45"/><rect x="8" y="7" width="9" height="1" fill="#ecdc9c" opacity="0.45"/><rect x="21" y="7" width="8" height="1" fill="#ecdc9c" opacity="0.45"/><rect x="35" y="7" width="8" height="1" fill="#ecdc9c" opacity="0.45"/><rect x="45" y="7" width="9" height="1" fill="#ecdc9c" opacity="0.45"/><rect x="57" y="7" width="9" height="1" fill="#ecdc9c" opacity="0.45"/><rect x="-4" y="9" width="5" height="1" fill="#8c7440" opacity="0.5"/><rect x="3" y="9" width="3" height="1" fill="#8c7440" opacity="0.5"/><rect x="11" y="9" width="9" height="1" fill="#8c7440" opacity="0.5"/><rect x="27" y="9" width="6" height="1" fill="#8c7440" opacity="0.5"/><rect x="35" y="9" width="5" height="1" fill="#8c7440" opacity="0.5"/><rect x="42" y="9" width="6" height="1" fill="#8c7440" opacity="0.5"/><rect x="51" y="9" width="3" height="1" fill="#8c7440" opacity="0.5"/><rect x="58" y="9" width="6" height="1" fill="#8c7440" opacity="0.5"/><rect x="69" y="9" width="9" height="1" fill="#8c7440" opacity="0.5"/><rect x="-3" y="9" width="9" height="1" fill="#8c7440" opacity="0.5"/><rect x="0" y="10" width="8" height="1" fill="#ecdc9c" opacity="0.45"/><rect x="14" y="10" width="10" height="1" fill="#ecdc9c" opacity="0.45"/><rect x="26" y="10" width="7" height="1" fill="#ecdc9c" opacity="0.45"/><rect x="39" y="10" width="6" height="1" fill="#ecdc9c" opacity="0.45"/><rect x="51" y="10" width="6" height="1" fill="#ecdc9c" opacity="0.45"/><rect x="63" y="10" width="5" height="1" fill="#ecdc9c" opacity="0.45"/><rect x="70" y="10" width="6" height="1" fill="#ecdc9c" opacity="0.45"/><rect x="-2" y="10" width="6" height="1" fill="#ecdc9c" opacity="0.45"/><rect x="-1" y="12" width="3" height="1" fill="#8c7440" opacity="0.5"/><rect x="8" y="12" width="7" height="1" fill="#8c7440" opacity="0.5"/><rect x="17" y="12" width="4" height="1" fill="#8c7440" opacity="0.5"/><rect x="26" y="12" width="5" height="1" fill="#8c7440" opacity="0.5"/><rect x="37" y="12" width="5" height="1" fill="#8c7440" opacity="0.5"/><rect x="45" y="12" width="8" height="1" fill="#8c7440" opacity="0.5"/><rect x="55" y="12" width="9" height="1" fill="#8c7440" opacity="0.5"/><rect x="68" y="12" width="5" height="1" fill="#8c7440" opacity="0.5"/><rect x="-4" y="12" width="5" height="1" fill="#8c7440" opacity="0.5"/><rect x="-1" y="13" width="10" height="1" fill="#ecdc9c" opacity="0.45"/><rect x="14" y="13" width="7" height="1" fill="#ecdc9c" opacity="0.45"/><rect x="26" y="13" width="10" height="1" fill="#ecdc9c" opacity="0.45"/><rect x="42" y="13" width="7" height="1" fill="#ecdc9c" opacity="0.45"/><rect x="55" y="13" width="9" height="1" fill="#ecdc9c" opacity="0.45"/><rect x="70" y="13" width="4" height="1" fill="#ecdc9c" opacity="0.45"/><rect x="-2" y="13" width="4" height="1" fill="#ecdc9c" opacity="0.45"/><rect x="-8" y="15" width="5" height="1" fill="#8c7440" opacity="0.5"/><rect x="2" y="15" width="8" height="1" fill="#8c7440" opacity="0.5"/><rect x="17" y="15" width="8" height="1" fill="#8c7440" opacity="0.5"/><rect x="28" y="15" width="5" height="1" fill="#8c7440" opacity="0.5"/><rect x="38" y="15" width="5" height="1" fill="#8c7440" opacity="0.5"/><rect x="49" y="15" width="5" height="1" fill="#8c7440" opacity="0.5"/><rect x="60" y="15" width="5" height="1" fill="#8c7440" opacity="0.5"/><rect x="67" y="15" width="9" height="1" fill="#8c7440" opacity="0.5"/><rect x="-5" y="15" width="9" height="1" fill="#8c7440" opacity="0.5"/><rect x="-4" y="16" width="6" height="1" fill="#ecdc9c" opacity="0.45"/><rect x="4" y="16" width="7" height="1" fill="#ecdc9c" opacity="0.45"/><rect x="17" y="16" width="8" height="1" fill="#ecdc9c" opacity="0.45"/><rect x="28" y="16" width="4" height="1" fill="#ecdc9c" opacity="0.45"/><rect x="36" y="16" width="7" height="1" fill="#ecdc9c" opacity="0.45"/><rect x="47" y="16" width="9" height="1" fill="#ecdc9c" opacity="0.45"/><rect x="60" y="16" width="8" height="1" fill="#ecdc9c" opacity="0.45"/><rect x="-7" y="18" width="3" height="1" fill="#8c7440" opacity="0.5"/><rect x="2" y="18" width="3" height="1" fill="#8c7440" opacity="0.5"/><rect x="12" y="18" width="3" height="1" fill="#8c7440" opacity="0.5"/><rect x="19" y="18" width="5" height="1" fill="#8c7440" opacity="0.5"/><rect x="31" y="18" width="6" height="1" fill="#8c7440" opacity="0.5"/><rect x="41" y="18" width="7" height="1" fill="#8c7440" opacity="0.5"/><rect x="54" y="18" width="5" height="1" fill="#8c7440" opacity="0.5"/><rect x="62" y="18" width="5" height="1" fill="#8c7440" opacity="0.5"/><rect x="70" y="18" width="5" height="1" fill="#8c7440" opacity="0.5"/><rect x="-2" y="18" width="5" height="1" fill="#8c7440" opacity="0.5"/><rect x="-6" y="19" width="8" height="1" fill="#ecdc9c" opacity="0.45"/><rect x="6" y="19" width="6" height="1" fill="#ecdc9c" opacity="0.45"/><rect x="17" y="19" width="4" height="1" fill="#ecdc9c" opacity="0.45"/><rect x="23" y="19" width="8" height="1" fill="#ecdc9c" opacity="0.45"/><rect x="34" y="19" width="6" height="1" fill="#ecdc9c" opacity="0.45"/><rect x="46" y="19" width="5" height="1" fill="#ecdc9c" opacity="0.45"/><rect x="55" y="19" width="5" height="1" fill="#ecdc9c" opacity="0.45"/><rect x="64" y="19" width="5" height="1" fill="#ecdc9c" opacity="0.45"/><rect x="-1" y="21" width="3" height="1" fill="#8c7440" opacity="0.5"/><rect x="8" y="21" width="5" height="1" fill="#8c7440" opacity="0.5"/><rect x="17" y="21" width="8" height="1" fill="#8c7440" opacity="0.5"/><rect x="28" y="21" width="6" height="1" fill="#8c7440" opacity="0.5"/><rect x="37" y="21" width="3" height="1" fill="#8c7440" opacity="0.5"/><rect x="44" y="21" width="8" height="1" fill="#8c7440" opacity="0.5"/><rect x="59" y="21" width="4" height="1" fill="#8c7440" opacity="0.5"/><rect x="69" y="21" width="6" height="1" fill="#8c7440" opacity="0.5"/><rect x="-3" y="21" width="6" height="1" fill="#8c7440" opacity="0.5"/><rect x="-1" y="22" width="10" height="1" fill="#ecdc9c" opacity="0.45"/><rect x="11" y="22" width="4" height="1" fill="#ecdc9c" opacity="0.45"/><rect x="21" y="22" width="5" height="1" fill="#ecdc9c" opacity="0.45"/><rect x="30" y="22" width="10" height="1" fill="#ecdc9c" opacity="0.45"/><rect x="46" y="22" width="5" height="1" fill="#ecdc9c" opacity="0.45"/><rect x="55" y="22" width="6" height="1" fill="#ecdc9c" opacity="0.45"/><rect x="63" y="22" width="10" height="1" fill="#ecdc9c" opacity="0.45"/><rect x="-9" y="22" width="10" height="1" fill="#ecdc9c" opacity="0.45"/><rect x="-5" y="24" width="7" height="1" fill="#8c7440" opacity="0.5"/><rect x="5" y="24" width="6" height="1" fill="#8c7440" opacity="0.5"/><rect x="15" y="24" width="7" height="1" fill="#8c7440" opacity="0.5"/><rect x="26" y="24" width="6" height="1" fill="#8c7440" opacity="0.5"/><rect x="36" y="24" width="8" height="1" fill="#8c7440" opacity="0.5"/><rect x="49" y="24" width="5" height="1" fill="#8c7440" opacity="0.5"/><rect x="59" y="24" width="7" height="1" fill="#8c7440" opacity="0.5"/><rect x="71" y="24" width="3" height="1" fill="#8c7440" opacity="0.5"/><rect x="-1" y="24" width="3" height="1" fill="#8c7440" opacity="0.5"/><rect x="-1" y="25" width="5" height="1" fill="#ecdc9c" opacity="0.45"/><rect x="6" y="25" width="7" height="1" fill="#ecdc9c" opacity="0.45"/><rect x="19" y="25" width="8" height="1" fill="#ecdc9c" opacity="0.45"/><rect x="32" y="25" width="8" height="1" fill="#ecdc9c" opacity="0.45"/><rect x="43" y="25" width="4" height="1" fill="#ecdc9c" opacity="0.45"/><rect x="52" y="25" width="10" height="1" fill="#ecdc9c" opacity="0.45"/><rect x="68" y="25" width="6" height="1" fill="#ecdc9c" opacity="0.45"/><rect x="-4" y="25" width="6" height="1" fill="#ecdc9c" opacity="0.45"/><rect x="-5" y="27" width="4" height="1" fill="#8c7440" opacity="0.5"/><rect x="1" y="27" width="9" height="1" fill="#8c7440" opacity="0.5"/><rect x="16" y="27" width="5" height="1" fill="#8c7440" opacity="0.5"/><rect x="23" y="27" width="9" height="1" fill="#8c7440" opacity="0.5"/><rect x="35" y="27" width="3" height="1" fill="#8c7440" opacity="0.5"/><rect x="40" y="27" width="9" height="1" fill="#8c7440" opacity="0.5"/><rect x="56" y="27" width="7" height="1" fill="#8c7440" opacity="0.5"/><rect x="66" y="27" width="6" height="1" fill="#8c7440" opacity="0.5"/><rect x="0" y="28" width="4" height="1" fill="#ecdc9c" opacity="0.45"/><rect x="9" y="28" width="9" height="1" fill="#ecdc9c" opacity="0.45"/><rect x="20" y="28" width="5" height="1" fill="#ecdc9c" opacity="0.45"/><rect x="31" y="28" width="6" height="1" fill="#ecdc9c" opacity="0.45"/><rect x="40" y="28" width="9" height="1" fill="#ecdc9c" opacity="0.45"/><rect x="51" y="28" width="8" height="1" fill="#ecdc9c" opacity="0.45"/><rect x="65" y="28" width="7" height="1" fill="#ecdc9c" opacity="0.45"/><rect x="-1" y="30" width="5" height="1" fill="#8c7440" opacity="0.5"/><rect x="7" y="30" width="5" height="1" fill="#8c7440" opacity="0.5"/><rect x="18" y="30" width="6" height="1" fill="#8c7440" opacity="0.5"/><rect x="26" y="30" width="5" height="1" fill="#8c7440" opacity="0.5"/><rect x="34" y="30" width="4" height="1" fill="#8c7440" opacity="0.5"/><rect x="40" y="30" width="7" height="1" fill="#8c7440" opacity="0.5"/><rect x="49" y="30" width="4" height="1" fill="#8c7440" opacity="0.5"/><rect x="56" y="30" width="9" height="1" fill="#8c7440" opacity="0.5"/><rect x="69" y="30" width="9" height="1" fill="#8c7440" opacity="0.5"/><rect x="-3" y="30" width="9" height="1" fill="#8c7440" opacity="0.5"/><rect x="-6" y="31" width="4" height="1" fill="#ecdc9c" opacity="0.45"/><rect x="3" y="31" width="9" height="1" fill="#ecdc9c" opacity="0.45"/><rect x="18" y="31" width="10" height="1" fill="#ecdc9c" opacity="0.45"/><rect x="33" y="31" width="4" height="1" fill="#ecdc9c" opacity="0.45"/><rect x="41" y="31" width="5" height="1" fill="#ecdc9c" opacity="0.45"/><rect x="50" y="31" width="8" height="1" fill="#ecdc9c" opacity="0.45"/><rect x="64" y="31" width="8" height="1" fill="#ecdc9c" opacity="0.45"/><rect x="0" y="33" width="6" height="1" fill="#8c7440" opacity="0.5"/><rect x="10" y="33" width="9" height="1" fill="#8c7440" opacity="0.5"/><rect x="21" y="33" width="9" height="1" fill="#8c7440" opacity="0.5"/><rect x="32" y="33" width="9" height="1" fill="#8c7440" opacity="0.5"/><rect x="44" y="33" width="3" height="1" fill="#8c7440" opacity="0.5"/><rect x="49" y="33" width="3" height="1" fill="#8c7440" opacity="0.5"/><rect x="54" y="33" width="6" height="1" fill="#8c7440" opacity="0.5"/><rect x="62" y="33" width="9" height="1" fill="#8c7440" opacity="0.5"/><rect x="0" y="34" width="8" height="1" fill="#ecdc9c" opacity="0.45"/><rect x="14" y="34" width="7" height="1" fill="#ecdc9c" opacity="0.45"/><rect x="25" y="34" width="5" height="1" fill="#ecdc9c" opacity="0.45"/><rect x="34" y="34" width="4" height="1" fill="#ecdc9c" opacity="0.45"/><rect x="42" y="34" width="7" height="1" fill="#ecdc9c" opacity="0.45"/><rect x="54" y="34" width="8" height="1" fill="#ecdc9c" opacity="0.45"/><rect x="66" y="34" width="6" height="1" fill="#ecdc9c" opacity="0.45"/></pattern></defs>
<path d="M312.4,40.2 C313.4,40.6 316.3,41.4 318.5,42.5 C320.8,43.6 323.1,45.1 325.6,46.8 C328.2,48.5 331.0,50.7 333.8,52.8 C336.5,54.8 339.4,57.1 342.0,59.0 C344.6,61.0 347.0,62.8 349.3,64.5 C351.6,66.3 353.7,67.8 355.8,69.5 C358.0,71.3 360.2,73.0 362.4,74.9 C364.7,76.8 367.1,78.8 369.6,81.0 C372.0,83.2 374.5,85.5 377.0,87.9 C379.5,90.2 382.0,92.6 384.3,95.1 C386.7,97.5 388.9,99.8 391.1,102.3 C393.2,104.7 395.2,107.2 397.3,109.6 C399.4,112.1 401.5,114.6 403.6,116.8 C405.8,119.1 407.9,121.2 410.2,123.2 C412.5,125.3 414.9,127.2 417.5,129.2 C420.2,131.3 423.1,133.4 425.9,135.4 C428.8,137.3 431.7,139.3 434.6,141.1 C437.4,142.9 440.2,144.6 443.0,146.3 C445.8,148.0 448.5,149.6 451.3,151.3 C454.1,153.0 457.0,154.8 459.9,156.6 C462.9,158.5 465.9,160.4 468.9,162.3 C471.9,164.1 475.0,166.0 478.0,167.9 C481.0,169.7 484.0,171.5 486.9,173.4 C489.8,175.2 492.6,177.1 495.2,179.0 C497.9,181.0 501.7,184.0 503.0,185.0 C501.7,183.4 497.9,178.3 495.2,175.3 C492.6,172.2 489.8,169.3 486.9,166.7 C484.0,164.0 481.0,161.6 478.0,159.3 C475.0,157.0 471.9,154.8 468.9,152.8 C465.9,150.8 462.9,148.9 459.9,147.1 C457.0,145.4 454.1,143.8 451.3,142.3 C448.5,140.8 445.8,139.4 443.0,138.0 C440.2,136.6 437.4,135.2 434.6,133.7 C431.7,132.3 428.8,130.7 425.9,129.2 C423.1,127.6 420.2,125.9 417.5,124.3 C414.9,122.6 412.5,121.0 410.2,119.3 C408.0,117.5 406.0,115.7 403.9,113.8 C401.9,111.9 400.0,109.8 398.0,107.6 C396.0,105.5 394.1,103.2 392.0,100.9 C389.9,98.6 387.6,96.2 385.3,93.9 C383.0,91.5 380.4,89.0 378.0,86.7 C375.6,84.3 373.0,82.0 370.6,79.7 C368.3,77.4 365.9,75.1 364.0,72.8 C362.1,70.5 360.4,68.3 359.1,65.8 C357.8,63.4 357.0,60.9 356.4,58.3 C355.8,55.7 355.6,52.9 355.6,50.4 C355.6,47.9 356.0,45.3 356.4,43.3 C356.8,41.3 357.6,39.6 358.3,38.3 C359.0,36.9 360.2,35.7 360.6,35.2 C361.2,35.6 362.9,36.6 364.4,37.6 C365.9,38.7 367.7,40.1 369.7,41.7 C371.6,43.3 374.0,45.3 376.3,47.2 C378.6,49.2 381.0,51.2 383.4,53.3 C385.8,55.3 388.2,57.5 390.6,59.7 C393.0,61.9 395.4,64.1 397.8,66.5 C400.2,68.8 402.6,71.1 405.0,73.6 C407.4,76.1 409.8,78.5 412.5,81.2 C415.1,84.0 417.9,87.0 420.8,90.1 C423.7,93.1 426.8,96.7 429.8,99.7 C432.8,102.7 435.8,105.6 438.8,108.1 C441.9,110.7 444.8,112.7 447.9,114.9 C451.1,117.1 454.3,119.0 457.6,121.2 C460.9,123.5 464.4,125.8 467.9,128.4 C471.3,131.0 474.9,133.8 478.1,136.7 C481.4,139.5 484.5,142.5 487.3,145.3 C490.1,148.1 492.6,151.0 495.1,153.7 C497.6,156.5 500.0,159.1 502.4,161.8 C504.8,164.5 507.2,167.1 509.6,169.8 C512.0,172.4 514.4,175.1 516.8,177.9 C519.2,180.6 521.6,183.4 523.9,186.2 C526.3,189.0 528.5,191.8 530.8,194.7 C533.1,197.6 535.2,200.4 537.6,203.6 C539.9,206.7 542.3,210.0 544.9,213.5 C547.5,217.0 550.3,220.8 553.0,224.6 C555.8,228.4 558.7,232.5 561.3,236.4 C563.9,240.4 566.5,244.4 568.7,248.4 C570.9,252.4 572.9,256.4 574.7,260.4 C576.5,264.4 578.1,268.4 579.5,272.2 C580.9,276.1 582.0,279.9 583.2,283.6 C584.4,287.4 585.3,291.0 586.4,294.8 C587.5,298.5 588.6,302.3 589.8,306.1 C590.9,310.0 592.1,314.0 593.2,318.0 C594.3,322.0 595.4,326.0 596.5,330.1 C597.5,334.2 598.5,338.3 599.5,342.4 C600.4,346.4 601.3,350.6 602.2,354.3 C603.0,358.0 603.7,361.5 604.4,364.6 C605.1,367.8 605.9,371.9 606.2,373.4 C605.0,372.1 601.6,368.1 599.1,365.4 C596.6,362.7 594.1,359.8 591.4,357.1 C588.7,354.4 585.8,351.6 582.9,349.1 C580.0,346.6 577.0,344.4 574.0,342.2 C571.0,340.0 566.5,337.0 565.0,336.0 C565.8,337.5 568.3,342.0 570.0,345.0 C571.6,348.0 573.4,351.0 575.0,354.0 C576.7,357.0 578.3,359.9 579.9,362.9 C581.6,365.9 583.1,368.8 584.7,372.0 C586.4,375.3 588.0,378.5 589.6,382.3 C591.2,386.1 592.9,390.4 594.3,394.8 C595.8,399.2 597.2,404.1 598.4,408.9 C599.6,413.8 600.6,418.8 601.4,423.9 C602.2,429.0 602.8,434.2 603.1,439.4 C603.4,444.6 603.4,449.8 603.2,455.1 C602.9,460.5 602.4,465.8 601.8,471.2 C601.1,476.7 599.9,485.2 599.5,488.0 C598.7,485.8 596.3,479.4 594.5,474.6 C592.8,469.8 590.9,464.7 588.8,459.3 C586.6,453.9 584.2,448.2 581.6,442.4 C579.1,436.7 574.8,427.9 573.4,425.0 C574.2,428.1 576.7,437.3 578.0,443.6 C579.4,449.8 580.6,455.7 581.4,462.4 C582.3,469.2 582.8,476.5 583.0,484.2 C583.1,492.0 583.0,500.8 582.4,508.8 C581.8,516.8 580.9,524.9 579.5,532.3 C578.0,539.8 576.2,546.5 573.6,553.4 C571.1,560.3 568.0,567.0 564.2,573.7 C560.5,580.4 555.9,587.2 551.0,593.6 C546.1,600.0 540.4,606.4 534.7,612.0 C529.0,617.6 523.0,622.5 517.0,627.0 C511.0,631.5 502.0,636.8 499.0,638.8 C501.2,636.2 508.1,628.9 512.1,623.4 C516.1,617.8 520.1,611.8 523.1,605.5 C526.1,599.1 528.4,592.0 530.1,585.2 C531.8,578.3 532.5,571.2 533.1,564.3 C533.8,557.5 533.9,547.4 534.0,544.0 C533.3,545.5 531.6,549.6 530.0,552.8 C528.3,556.0 526.5,559.6 524.1,562.9 C521.8,566.3 518.9,569.9 515.8,572.9 C512.8,575.8 509.2,578.5 505.8,580.6 C502.5,582.7 498.9,584.2 495.6,585.6 C492.3,586.9 487.6,588.0 486.0,588.5 C487.8,585.6 493.3,577.2 496.6,570.9 C499.9,564.6 503.3,557.8 505.8,550.5 C508.3,543.1 510.6,534.9 511.8,526.8 C513.0,518.7 513.3,509.8 512.8,501.6 C512.4,493.5 510.8,484.8 509.3,477.8 C507.7,470.8 505.5,464.6 503.7,459.6 C501.9,454.6 499.5,449.9 498.6,448.0 C498.4,452.5 498.5,466.2 497.6,475.1 C496.7,483.9 495.3,492.8 493.1,501.2 C490.8,509.6 487.4,517.9 483.9,525.4 C480.4,532.8 475.9,539.8 472.1,545.8 C468.3,551.7 464.3,556.7 461.2,560.8 C458.0,564.9 455.4,567.9 453.1,570.4 C450.8,572.9 448.5,575.1 447.6,576.0 C446.9,573.7 445.2,566.6 443.6,562.0 C442.1,557.3 440.4,552.7 438.3,548.3 C436.2,543.9 433.7,539.5 430.9,535.3 C428.1,531.1 425.0,527.0 421.6,523.3 C418.2,519.6 414.5,516.0 410.4,512.9 C406.4,509.7 402.0,506.9 397.4,504.6 C392.8,502.2 387.8,500.3 382.8,498.7 C377.7,497.2 372.4,496.1 367.2,495.3 C362.1,494.5 356.7,494.2 351.8,494.0 C346.8,493.8 342.0,494.0 337.5,494.3 C333.0,494.6 326.8,495.5 324.7,495.7 C325.6,494.1 327.9,489.6 330.0,486.1 C332.1,482.7 334.6,479.0 337.3,475.1 C340.0,471.2 343.2,466.9 346.2,462.7 C349.3,458.6 352.5,454.2 355.5,450.4 C358.6,446.5 361.5,442.8 364.4,439.4 C367.3,436.0 371.6,431.6 373.0,430.0 C372.5,429.5 371.5,428.3 370.2,427.2 C368.9,426.2 367.6,424.8 365.3,423.6 C363.0,422.4 359.9,421.0 356.3,420.2 C352.7,419.3 348.2,418.8 343.6,418.5 C338.9,418.3 333.8,418.4 328.5,418.7 C323.2,418.9 317.5,419.4 311.8,420.0 C306.0,420.5 299.9,421.3 294.1,422.0 C288.3,422.8 282.6,423.8 277.1,424.7 C271.6,425.6 266.4,426.6 261.2,427.4 C256.1,428.1 251.0,428.7 246.3,429.0 C241.6,429.3 237.2,429.4 233.3,429.2 C229.3,429.0 226.0,428.5 222.8,427.8 C219.6,427.2 216.9,426.4 214.1,425.4 C211.3,424.5 208.6,423.5 205.8,422.3 C203.0,421.1 200.2,419.9 197.5,418.3 C194.7,416.8 191.9,415.0 189.1,413.1 C186.4,411.2 183.6,409.0 180.8,406.8 C178.0,404.6 173.9,401.1 172.5,400.0 C171.5,399.0 168.4,396.1 166.7,393.9 C164.9,391.8 163.2,389.5 162.0,387.4 C160.8,385.3 160.0,383.0 159.6,381.1 C159.1,379.1 159.2,376.7 159.1,375.8 C160.0,374.7 162.2,371.5 164.6,369.0 C166.9,366.4 169.8,363.6 173.2,360.6 C176.6,357.6 180.8,354.2 184.9,351.0 C189.0,347.8 193.5,344.4 197.9,341.1 C202.2,337.8 206.7,334.5 211.1,331.3 C215.5,328.1 219.9,324.9 224.3,321.8 C228.6,318.7 233.1,315.7 237.2,312.7 C241.2,309.7 245.3,306.8 248.8,303.8 C252.3,300.7 255.4,297.7 258.3,294.3 C261.1,290.9 263.5,287.3 265.9,283.6 C268.2,279.9 270.3,275.9 272.4,272.1 C274.5,268.2 276.5,264.3 278.5,260.6 C280.5,256.9 282.5,253.4 284.6,250.0 C286.7,246.6 288.8,243.3 291.1,240.0 C293.4,236.6 296.0,233.2 298.6,230.0 C301.2,226.7 304.1,223.3 306.7,220.3 C309.3,217.4 311.9,214.6 314.1,212.2 C316.4,209.8 318.3,207.9 320.1,206.1 C322.0,204.3 323.6,202.8 325.2,201.4 C326.9,199.9 328.5,198.7 330.1,197.6 C331.7,196.4 333.9,195.2 334.7,194.7 C335.5,195.5 338.0,197.6 339.6,199.4 C341.2,201.1 342.8,203.1 344.5,205.2 C346.2,207.3 347.9,209.7 349.8,212.0 C351.7,214.2 353.7,216.7 355.8,218.9 C357.8,221.0 359.9,223.1 361.9,225.0 C364.0,226.9 366.0,228.5 367.9,230.0 C369.8,231.5 372.6,233.3 373.5,234.0 C373.0,232.6 371.8,228.4 370.5,225.7 C369.2,222.9 367.6,220.2 365.8,217.6 C364.1,215.0 361.9,212.5 359.9,209.9 C357.9,207.3 355.7,204.7 353.6,202.1 C351.5,199.4 349.4,196.6 347.3,193.7 C345.2,190.9 343.1,187.9 341.1,185.0 C339.2,182.1 337.2,179.2 335.4,176.3 C333.6,173.3 331.9,170.3 330.2,167.2 C328.5,164.0 326.9,160.7 325.2,157.4 C323.6,154.0 321.9,150.5 320.4,147.0 C319.0,143.5 317.5,140.0 316.3,136.5 C315.1,133.0 314.0,129.5 313.1,126.0 C312.3,122.5 311.6,119.0 311.0,115.6 C310.4,112.2 309.9,108.8 309.5,105.4 C309.1,101.9 308.7,98.6 308.5,95.0 C308.3,91.4 308.1,87.6 308.2,83.8 C308.2,80.0 308.4,75.9 308.7,72.0 C309.0,68.1 309.6,64.0 310.0,60.3 C310.4,56.5 311.0,52.9 311.4,49.6 C311.8,46.2 312.2,41.8 312.4,40.2 Z" fill="url(#tO)"/>
<path d="M162.0,374.0 C164.5,373.0 172.1,370.0 177.3,368.2 C182.5,366.4 187.5,364.8 193.0,363.4 C198.6,362.0 204.4,361.0 210.5,360.1 C216.6,359.1 223.4,358.6 229.8,357.9 C236.2,357.1 242.8,356.6 248.8,355.6 C254.8,354.6 260.2,353.3 265.8,351.9 C271.3,350.5 276.3,348.6 282.1,347.1 C287.9,345.5 293.9,343.8 300.5,342.9 C307.0,341.9 314.4,341.2 321.3,341.1 C328.1,341.0 335.2,341.6 341.5,342.3 C347.9,343.0 356.4,344.9 359.4,345.4 C361.4,344.9 367.0,343.0 371.1,342.1 C375.3,341.2 380.0,340.5 384.6,340.0 C389.1,339.5 394.1,339.4 398.6,339.2 C403.1,339.1 407.5,339.3 411.3,339.0 C415.1,338.7 418.6,338.5 421.4,337.5 C424.2,336.5 426.5,335.1 428.4,333.0 C430.3,330.9 431.7,328.2 432.9,325.2 C434.0,322.2 434.8,318.6 435.2,315.1 C435.6,311.7 435.5,307.9 435.3,304.5 C435.0,301.1 434.2,297.7 433.7,294.9 C433.2,292.1 432.5,289.6 432.1,287.5 C431.8,285.3 431.7,282.9 431.6,282.0 C432.3,282.7 434.2,284.2 435.6,286.0 C436.9,287.7 438.3,290.0 439.6,292.6 C440.8,295.2 442.0,298.5 443.0,301.7 C444.0,305.0 444.8,308.6 445.4,312.1 C446.0,315.6 446.4,319.2 446.6,322.8 C446.8,326.3 446.8,329.9 446.5,333.5 C446.1,337.1 445.6,340.6 444.4,344.4 C443.2,348.3 441.7,352.2 439.5,356.4 C437.4,360.7 434.6,365.2 431.6,369.7 C428.5,374.2 425.0,378.9 421.3,383.3 C417.7,387.8 413.8,392.2 409.9,396.3 C406.0,400.5 401.9,404.6 398.1,408.2 C394.3,411.9 390.3,415.5 387.0,418.4 C383.8,421.3 380.8,423.7 378.4,425.6 C376.0,427.5 373.5,429.3 372.5,430.0 C371.6,428.6 369.9,423.9 367.2,421.4 C364.6,419.0 361.7,416.7 356.7,415.2 C351.6,413.8 345.0,412.9 337.0,412.8 C329.0,412.6 318.8,413.2 308.9,414.1 C299.0,414.9 287.7,416.7 277.6,417.8 C267.4,418.9 257.3,420.4 248.1,420.6 C238.8,420.8 230.2,420.4 222.2,419.1 C214.3,417.9 206.8,415.4 200.4,413.2 C194.0,411.1 188.6,408.3 183.9,406.1 C179.1,403.9 174.0,401.0 172.0,400.0 L162.0,374.0 Z" fill="url(#tW)"/>
<path d="M172.5,400.0 C173.3,400.1 175.2,400.3 177.2,400.7 C179.2,401.1 181.8,401.7 184.4,402.4 C187.1,403.1 190.2,404.1 193.1,405.0 C196.0,405.9 198.8,406.9 201.6,407.6 C204.4,408.3 207.2,408.9 210.0,409.2 C212.7,409.5 215.6,409.6 218.3,409.5 C221.0,409.5 223.8,409.2 226.4,408.9 C229.1,408.5 231.6,408.1 234.2,407.4 C236.8,406.7 239.3,405.8 242.1,404.7 C244.9,403.5 247.9,401.9 251.1,400.4 C254.3,398.9 257.8,397.1 261.2,395.8 C264.6,394.5 268.1,393.3 271.6,392.4 C275.1,391.6 278.5,391.2 282.0,390.8 C285.5,390.4 288.9,390.3 292.5,390.0 C296.1,389.8 299.8,389.6 303.6,389.3 C307.4,389.0 313.3,388.5 315.3,388.3 C314.6,388.7 313.2,389.7 311.3,390.6 C309.3,391.5 306.6,392.7 303.6,393.9 C300.6,395.1 296.6,396.5 293.1,397.7 C289.5,398.9 285.7,399.9 282.3,401.0 C279.0,402.2 275.7,403.2 272.8,404.4 C270.0,405.7 267.4,407.1 265.1,408.5 C262.9,410.0 261.0,411.7 259.3,413.4 C257.6,415.0 255.7,417.6 255.0,418.5 C256.8,418.0 261.8,416.6 265.7,415.8 C269.6,414.9 273.7,414.1 278.2,413.3 C282.6,412.5 287.6,411.7 292.6,410.9 C297.6,410.2 302.9,409.3 308.3,408.7 C313.6,408.1 319.3,407.5 324.9,407.3 C330.4,407.1 336.5,407.1 341.7,407.5 C346.9,407.9 352.0,408.6 356.0,409.8 C360.1,411.0 363.3,412.7 365.8,414.7 C368.2,416.7 369.7,419.2 370.9,421.8 C372.2,424.3 373.1,428.6 373.5,430.0 C373.0,429.5 371.8,428.3 370.4,427.2 C369.1,426.2 367.7,424.8 365.3,423.6 C363.0,422.4 360.0,421.0 356.3,420.2 C352.7,419.3 348.2,418.8 343.6,418.5 C338.9,418.3 333.8,418.4 328.5,418.7 C323.2,418.9 317.5,419.4 311.8,420.0 C306.0,420.5 299.9,421.3 294.1,422.0 C288.3,422.8 282.6,423.8 277.1,424.7 C271.6,425.6 266.4,426.6 261.2,427.4 C256.1,428.1 251.0,428.7 246.3,429.0 C241.6,429.3 237.2,429.4 233.3,429.2 C229.3,429.0 226.0,428.5 222.8,427.8 C219.6,427.2 216.9,426.4 214.1,425.4 C211.3,424.5 208.6,423.5 205.8,422.3 C203.0,421.1 200.2,419.9 197.5,418.3 C194.7,416.8 191.9,415.0 189.1,413.1 C186.4,411.2 183.6,409.0 180.8,406.8 C178.0,404.6 173.9,401.1 172.5,400.0 Z" fill="url(#tG)"/>
<g fill="#6f766d"><circle cx="196.8" cy="377" r="2.3"/><circle cx="202" cy="377" r="2.3"/><circle cx="209.6" cy="377" r="2.3"/><circle cx="217" cy="374.5" r="2.3"/><circle cx="222.4" cy="374.5" r="2.3"/><circle cx="227.8" cy="374.5" r="2.3"/><circle cx="236" cy="374.5" r="2.3"/><circle cx="240" cy="374.5" r="2.3"/><circle cx="197.5" cy="387" r="2.3"/><circle cx="202.5" cy="387" r="2.3"/><circle cx="209.6" cy="387" r="2.3"/><circle cx="219" cy="386" r="2.3"/><circle cx="225" cy="386" r="2.3"/><circle cx="230.5" cy="386" r="2.3"/><circle cx="240" cy="386" r="2.3"/><circle cx="205.5" cy="400" r="2.3"/><circle cx="209" cy="400" r="2.3"/><circle cx="216.4" cy="397.4" r="2.3"/><circle cx="221" cy="397.4" r="2.3"/><circle cx="227.8" cy="397.4" r="2.3"/></g>
<path d="M157.4,381.4 C157.5,379.6 158.4,377.0 159.9,375.6 C161.4,374.2 164.0,374.1 166.5,373.2 C169.0,372.2 172.3,370.4 174.8,369.9 C177.3,369.4 179.5,369.5 181.4,370.3 C183.3,371.1 185.4,373.0 186.3,374.8 C187.2,376.6 187.5,379.2 187.1,381.4 C186.7,383.6 185.0,385.9 183.8,388.0 C182.6,390.1 181.2,392.0 179.7,393.8 C178.2,395.6 176.5,397.9 174.8,398.7 C173.2,399.5 171.6,399.8 169.8,398.7 C168.0,397.6 165.8,394.2 164.0,392.1 C162.2,390.1 160.2,388.2 159.1,386.4 C158.0,384.6 157.3,383.2 157.4,381.4 Z" fill="#333333"/>
<path d="M335.7,86.6 C336.9,87.8 340.5,91.3 342.7,93.8 C344.9,96.3 347.0,98.9 348.8,101.5 C350.6,104.2 352.2,107.0 353.5,109.8 C354.7,112.6 355.6,115.6 356.3,118.6 C357.1,121.6 357.7,126.3 358.0,127.8 C358.4,127.2 359.4,125.4 360.1,124.2 C360.8,123.0 361.7,121.0 362.0,120.4 C363.0,121.8 366.0,125.8 368.1,128.7 C370.2,131.6 372.3,134.7 374.4,137.9 C376.4,141.0 378.5,144.3 380.3,147.5 C382.1,150.7 383.8,153.9 385.2,157.0 C386.5,160.1 387.6,163.2 388.6,166.3 C389.6,169.4 390.6,174.1 391.0,175.7 C389.8,175.0 386.2,172.7 383.7,171.7 C381.2,170.8 378.6,169.9 376.0,170.0 C373.5,170.1 370.9,170.9 368.6,172.1 C366.4,173.3 364.3,175.4 362.6,177.4 C360.8,179.4 358.8,182.9 358.0,184.0 C358.0,182.9 358.2,179.5 358.1,177.1 C358.0,174.8 357.8,172.4 357.4,169.9 C356.9,167.5 356.2,165.0 355.3,162.5 C354.4,160.0 353.2,157.5 351.9,154.8 C350.6,152.1 349.0,149.4 347.4,146.3 C345.8,143.3 343.9,140.0 342.3,136.7 C340.7,133.3 339.0,129.7 337.7,126.2 C336.5,122.7 335.4,119.1 334.6,115.7 C333.9,112.2 333.6,108.9 333.5,105.7 C333.4,102.4 333.6,99.3 334.0,96.1 C334.4,92.9 335.4,88.2 335.7,86.6 Z" fill="#e4b4ac" stroke="#b98985" stroke-width="1.3" stroke-linejoin="round"/>
<path d="M296.6,266.5 C298.4,266.6 303.7,266.9 307.4,267.3 C311.2,267.6 315.1,268.1 319.0,268.6 C323.0,269.0 327.1,269.6 331.2,270.0 C335.3,270.5 339.5,270.9 343.6,271.2 C347.7,271.5 353.9,271.9 356.0,272.0 C355.2,272.8 352.9,275.2 351.0,276.9 C349.2,278.6 347.2,280.4 344.8,282.2 C342.4,283.9 339.6,285.7 336.6,287.3 C333.5,289.0 329.9,290.5 326.4,291.9 C322.9,293.3 319.1,294.6 315.6,295.9 C312.1,297.1 308.8,298.3 305.6,299.4 C302.4,300.6 298.1,302.2 296.6,302.8 C296.9,301.3 298.2,296.8 298.5,293.6 C298.9,290.3 298.7,286.6 298.6,283.3 C298.4,280.0 297.8,276.6 297.5,273.8 C297.2,271.0 296.8,267.7 296.6,266.5 Z" fill="#e3e8e2"/>
<path d="M299.0,274.8 C299.9,273.2 301.7,272.3 303.2,272.3 C304.7,272.3 306.5,273.7 308.0,274.8 C309.5,275.9 310.6,278.6 312.3,279.0 C314.0,279.4 316.6,276.8 318.0,277.3 C319.4,277.8 320.5,280.4 320.5,282.2 C320.5,284.0 319.4,286.4 318.0,288.0 C316.6,289.6 314.2,291.2 312.3,292.0 C310.4,292.8 308.3,293.4 306.5,293.0 C304.7,292.6 302.9,291.4 301.5,289.6 C300.1,287.8 298.2,284.7 297.8,282.2 C297.4,279.7 298.1,276.4 299.0,274.8 Z" fill="#2e2e2e"/>
<g font-size="8">
<text x="33" y="20" textLength="116" lengthAdjust="spacingAndGlyphs">Wilcom EmbroideryStudio – Level 3</text>
<text x="477" y="20" textLength="22" lengthAdjust="spacingAndGlyphs">Z: 1.54</text>
<text x="579" y="20" textLength="74" lengthAdjust="spacingAndGlyphs">Fox 20-09-2021 5 inch</text>
<text x="736" y="20" textLength="87" lengthAdjust="spacingAndGlyphs">H: 124.9 mm   W: 92.9 mm</text>
</g>
<g font-size="8">
<text x="33" y="654" textLength="23" lengthAdjust="spacingAndGlyphs">Author:</text>
<text x="191" y="654" textLength="82" lengthAdjust="spacingAndGlyphs">Last Saved: 20 Sep, 2021</text>
<text x="330" y="654" textLength="91" lengthAdjust="spacingAndGlyphs">Printed: 20 Sep, 2021 22:49</text>
<text x="514" y="654" textLength="34" lengthAdjust="spacingAndGlyphs">Keywords:</text>
</g>
<g font-size="7.45">
<text x="744" y="37.0">Stitches:</text><text x="848" y="37.0">12687</text>
<text x="744" y="47.6">Colors:</text><text x="848" y="47.6">6</text>
<text x="744" y="58.2">Color changes:</text><text x="848" y="58.2">6</text>
<text x="744" y="68.8">Stops:</text><text x="848" y="68.8">7</text>
<text x="744" y="90.0">Machine:</text><text x="848" y="90.0">Tajima</text>
<text x="744" y="100.6">Trims:</text><text x="848" y="100.6">9</text>
<text x="744" y="121.8">Left:</text><text x="848" y="121.8">46.4 mm</text>
<text x="744" y="132.4">Right:</text><text x="848" y="132.4">46.4 mm</text>
<text x="744" y="143.0">Up:</text><text x="848" y="143.0">62.4 mm</text>
<text x="744" y="153.6">Down:</text><text x="848" y="153.6">62.4 mm</text>
<text x="744" y="174.8">EndX:</text><text x="848" y="174.8">0.0 mm</text>
<text x="744" y="185.4">EndY:</text><text x="848" y="185.4">0.0 mm</text>
<text x="744" y="206.6">Max Stitch:</text><text x="848" y="206.6">7.1 mm</text>
<text x="744" y="217.2">Min Stitch:</text><text x="848" y="217.2">0.1 mm</text>
<text x="744" y="227.8">Max Jump:</text><text x="848" y="227.8">7.0 mm</text>
<rect x="744" y="243" width="2" height="21" fill="#101828"/><rect x="747" y="243" width="1" height="21" fill="#21183a"/><rect x="750" y="243" width="1" height="21" fill="#0c0c18"/><rect x="753" y="243" width="1" height="21" fill="#403428"/><rect x="756" y="243" width="1" height="21" fill="#1a1030"/><rect x="757" y="243" width="2" height="21" fill="#58607a"/><rect x="759" y="243" width="1" height="21" fill="#21183a"/><rect x="762" y="243" width="2" height="21" fill="#1a1030"/><rect x="766" y="243" width="1" height="21" fill="#2c2040"/><rect x="769" y="243" width="1" height="21" fill="#c8b098"/><rect x="772" y="243" width="2" height="21" fill="#1a1030"/><rect x="775" y="243" width="1" height="21" fill="#a89a80"/><rect x="777" y="243" width="2" height="21" fill="#58607a"/><rect x="780" y="243" width="3" height="21" fill="#21183a"/><rect x="785" y="243" width="2" height="21" fill="#a89a80"/><rect x="788" y="243" width="1" height="21" fill="#c8b098"/><rect x="791" y="243" width="1" height="21" fill="#0c0c18"/><rect x="792" y="243" width="3" height="21" fill="#302838"/><rect x="795" y="243" width="3" height="21" fill="#1a1030"/><rect x="800" y="243" width="1" height="21" fill="#8a9ab8"/><rect x="803" y="243" width="2" height="21" fill="#b0a0a8"/><rect x="806" y="243" width="2" height="21" fill="#c8b098"/><rect x="809" y="243" width="2" height="21" fill="#3a3048"/><rect x="812" y="243" width="1" height="21" fill="#302838"/><rect x="814" y="243" width="1" height="21" fill="#c8b098"/><rect x="816" y="243" width="3" height="21" fill="#8a9ab8"/><rect x="820" y="243" width="2" height="21" fill="#3a3048"/><rect x="824" y="243" width="1" height="21" fill="#21183a"/><rect x="827" y="243" width="2" height="21" fill="#101828"/><rect x="830" y="243" width="1" height="21" fill="#403428"/><rect x="832" y="243" width="2" height="21" fill="#1a1030"/><rect x="834" y="243" width="3" height="21" fill="#c8b098"/><rect x="838" y="243" width="2" height="21" fill="#302838"/><rect x="841" y="243" width="3" height="21" fill="#8a9ab8"/><rect x="846" y="243" width="2" height="21" fill="#21183a"/><rect x="848" y="243" width="2" height="21" fill="#8a9ab8"/><rect x="850" y="243" width="1" height="21" fill="#302838"/><rect x="852" y="243" width="3" height="21" fill="#7080a0"/><rect x="856" y="243" width="2" height="21" fill="#302838"/><rect x="859" y="243" width="2" height="21" fill="#1a1030"/><rect x="862" y="243" width="2" height="21" fill="#101828"/><rect x="866" y="243" width="1" height="21" fill="#8a9ab8"/><rect x="867" y="243" width="1" height="21" fill="#b0a0a8"/><rect x="869" y="243" width="1" height="21" fill="#302838"/><rect x="871" y="243" width="2" height="21" fill="#58607a"/><rect x="874" y="243" width="1" height="21" fill="#101828"/><rect x="876" y="243" width="2" height="21" fill="#a89a80"/><rect x="879" y="243" width="1" height="21" fill="#98b0c8"/><rect x="881" y="243" width="3" height="21" fill="#3a3048"/><rect x="885" y="243" width="2" height="21" fill="#7080a0"/><rect x="888" y="243" width="1" height="21" fill="#101828"/><rect x="889" y="243" width="1" height="21" fill="#101828"/><rect x="891" y="243" width="1" height="21" fill="#1a1030"/><rect x="893" y="243" width="3" height="21" fill="#101828"/><rect x="897" y="243" width="2" height="21" fill="#1a1030"/><rect x="900" y="243" width="2" height="21" fill="#a89a80"/><rect x="903" y="243" width="3" height="21" fill="#c8b098"/><rect x="907" y="243" width="1" height="21" fill="#302838"/><rect x="910" y="243" width="3" height="21" fill="#7080a0"/><rect x="913" y="243" width="2" height="21" fill="#403428"/><rect x="917" y="243" width="2" height="21" fill="#58607a"/><rect x="920" y="243" width="2" height="21" fill="#21183a"/><rect x="923" y="243" width="2" height="21" fill="#1a1030"/><rect x="926" y="243" width="1" height="21" fill="#2c2040"/><rect x="928" y="243" width="1" height="21" fill="#21183a"/><rect x="930" y="243" width="3" height="21" fill="#1a1030"/><rect x="933" y="243" width="1" height="21" fill="#c8b098"/><rect x="935" y="243" width="3" height="21" fill="#21183a"/><rect x="939" y="243" width="2" height="21" fill="#1a1030"/>
<rect x="744" y="264" width="1" height="11" fill="#c8b098"/><rect x="746" y="264" width="1" height="11" fill="#7080a0"/><rect x="748" y="264" width="2" height="11" fill="#c8b098"/><rect x="751" y="264" width="2" height="11" fill="#21183a"/><rect x="753" y="264" width="2" height="11" fill="#8a9ab8"/><rect x="756" y="264" width="2" height="11" fill="#3a3048"/><rect x="758" y="264" width="1" height="11" fill="#21183a"/><rect x="760" y="264" width="2" height="11" fill="#8a9ab8"/><rect x="763" y="264" width="3" height="11" fill="#1a1030"/><rect x="767" y="264" width="3" height="11" fill="#0c0c18"/><rect x="771" y="264" width="3" height="11" fill="#403428"/><rect x="774" y="264" width="3" height="11" fill="#3a3048"/><rect x="777" y="264" width="2" height="11" fill="#a89a80"/><rect x="780" y="264" width="1" height="11" fill="#0c0c18"/><rect x="782" y="264" width="3" height="11" fill="#a89a80"/><rect x="787" y="264" width="2" height="11" fill="#7080a0"/><rect x="790" y="264" width="3" height="11" fill="#b0a0a8"/><rect x="794" y="264" width="1" height="11" fill="#98b0c8"/><rect x="796" y="264" width="1" height="11" fill="#2c2040"/>
<text x="744" y="281.3">Colorway:</text><text x="848" y="281.3">Colorway 1</text>
</g>
<g font-size="9.2" font-weight="bold">
<text x="744" y="303.7">#</text><rect x="744" y="305.2" width="5" height="1" fill="#000"/>
<text x="769.4" y="303.7">N#</text><rect x="769.4" y="305.2" width="12" height="1" fill="#000"/>
<text x="826.4" y="303.7">St.</text><rect x="826.4" y="305.2" width="12" height="1" fill="#000"/>
<text x="857.3" y="303.7">Descr_Code</text><rect x="857.3" y="305.2" width="56" height="1" fill="#000"/>
</g>
<g font-size="7.45">
<text x="744" y="323.5">1.</text><text x="768" y="323.5">9</text>
<rect x="792.5" y="318.5" width="7" height="8" fill="#e47f25" stroke="#000" stroke-width="1"/>
<text x="848" y="323.5" text-anchor="end">10252</text><text x="853" y="323.5">Orange 9</text>
<text x="756" y="334.8">Brand: Willcom</text>
<text x="744" y="344.9">2.</text><text x="768" y="344.9">15</text>
<rect x="792.5" y="339.9" width="7" height="8" fill="#ffffff" stroke="#000" stroke-width="1"/>
<text x="848" y="344.9" text-anchor="end">1218</text><text x="853" y="344.9">White 15</text>
<text x="756" y="356.2">Brand: Willcom</text>
<text x="744" y="366.2">3.</text><text x="768" y="366.2">45</text>
<rect x="792.5" y="361.2" width="7" height="8" fill="#c7a567" stroke="#000" stroke-width="1"/>
<text x="848" y="366.2" text-anchor="end">524</text><text x="853" y="366.2">Gold 45</text>
<text x="756" y="377.5">Brand: Willcom</text>
<text x="744" y="387.6">4.</text><text x="768" y="387.6">15</text>
<rect x="792.5" y="382.6" width="7" height="8" fill="#ffffff" stroke="#000" stroke-width="1"/>
<text x="848" y="387.6" text-anchor="end">103</text><text x="853" y="387.6">White 15</text>
<text x="756" y="398.9">Brand: Willcom</text>
<text x="744" y="408.9">5.</text><text x="768" y="408.9">14</text>
<rect x="792.5" y="403.9" width="7" height="8" fill="#8e8e8e" stroke="#000" stroke-width="1"/>
<text x="848" y="408.9" text-anchor="end">197</text><text x="853" y="408.9">Grey 14</text>
<text x="756" y="420.2">Brand: Willcom</text>
<text x="744" y="430.2">6.</text><text x="768" y="430.2">13</text>
<rect x="792.5" y="425.2" width="7" height="8" fill="#1e1a1a" stroke="#000" stroke-width="1"/>
<text x="848" y="430.2" text-anchor="end">144</text><text x="853" y="430.2">Black 13</text>
<text x="756" y="441.6">Brand: Willcom</text>
<text x="744" y="451.6">7.</text><text x="768" y="451.6">10</text>
<rect x="792.5" y="446.6" width="7" height="8" fill="#eaa0a0" stroke="#000" stroke-width="1"/>
<text x="848" y="451.6" text-anchor="end">247</text><text x="853" y="451.6">Pink 10</text>
<text x="756" y="462.9">Brand: Willcom</text>
<text x="744" y="472.8">Total Bobbin:</text><text x="850" y="472.8">31.55m</text>
</g></svg>
</body></html>
